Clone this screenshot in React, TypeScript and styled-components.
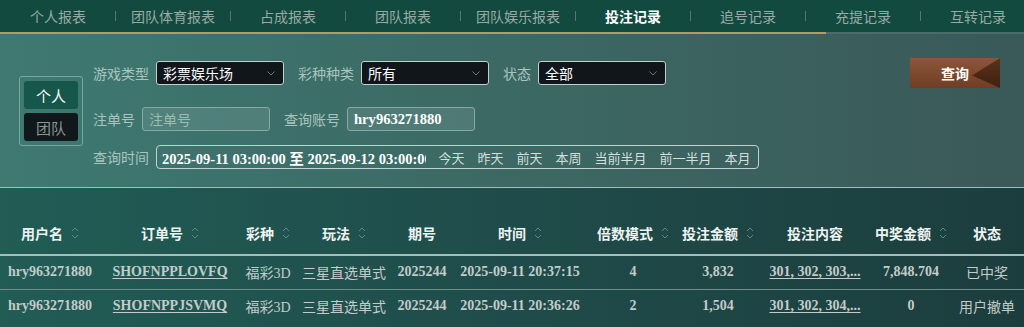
import React from 'react';
import styled, { createGlobalStyle } from 'styled-components';

const GlobalStyle = createGlobalStyle`
  html, body { margin: 0; padding: 0; width: 1024px; height: 327px; overflow: hidden; background: #1f4d49; }
  body { font-family: "Noto Sans CJK SC", "Noto Sans", sans-serif; }
  * { box-sizing: border-box; }
`;

const CJK = `"Noto Sans CJK SC", "Noto Sans", sans-serif`;
const SERIF = `"Liberation Serif", "Noto Sans CJK SC", serif`;

const Page = styled.div`
  width: 1024px;
  height: 327px;
  display: flex;
  flex-direction: column;
  overflow: hidden;
`;

const TabBar = styled.nav`
  display: flex;
  align-items: center;
  height: 32px;
  padding-left: 1px;
  background: #124a3f;
  overflow: hidden;
`;

const Tab = styled.div<{ $active?: boolean }>`
  flex: 0 0 114px;
  text-align: center;
  font-size: 14px;
  line-height: 32px;
  white-space: nowrap;
  color: ${(p) => (p.$active ? '#ffffff' : '#97aaa4')};
  font-weight: ${(p) => (p.$active ? 700 : 400)};
`;

const TabSep = styled.span`
  flex: 0 0 1px;
  height: 10px;
  background: #56766f;
`;

const Track = styled.div`
  display: flex;
  height: 2px;
  background: #4c6c69;
`;

const Thumb = styled.div`
  width: 826px;
  background: #b89a5c;
`;

const Panel = styled.section`
  display: flex;
  align-items: flex-start;
  height: 154px;
  padding: 24px 24px 18px 19px;
  background: linear-gradient(90deg, #3e7972 0%, #3c6a65 45%, #3a5959 100%);
  border-bottom: 1px solid #a3bdb9;
`;

const ToggleGroup = styled.div`
  margin-top: 18px;
  width: 64px;
  padding: 4px;
  display: flex;
  flex-direction: column;
  gap: 4px;
  border: 1px solid #78a59e;
  border-radius: 3px;
`;

const ToggleBtn = styled.div<{ $active?: boolean }>`
  height: 28px;
  display: flex;
  align-items: center;
  justify-content: center;
  border-radius: 3px;
  font-size: 15px;
  background: ${(p) => (p.$active ? '#17564a' : '#10181b')};
  color: ${(p) => (p.$active ? '#f2f6f5' : '#8a9794')};
`;

const Form = styled.div`
  flex: 1;
  margin-left: 10px;
  display: flex;
  flex-direction: column;
`;

const Row = styled.div<{ $mt?: number }>`
  display: flex;
  align-items: center;
  margin-top: ${(p) => p.$mt ?? 0}px;
`;

const Field = styled.div`
  display: flex;
  align-items: center;
  gap: 7px;
  & + & {
    margin-left: 14px;
  }
`;

const Label = styled.span`
  font-size: 14px;
  color: #a9c4be;
  white-space: nowrap;
`;

const Select = styled.div`
  width: 128px;
  height: 24px;
  padding: 0 8px 0 6px;
  display: flex;
  align-items: center;
  justify-content: space-between;
  background: #10161a;
  border: 1px solid #c5cfcf;
  border-radius: 3px;
  color: #ffffff;
  font-size: 14px;
`;

const TextInput = styled.input<{ $serif?: boolean }>`
  width: 128px;
  height: 24px;
  padding: 0 6px;
  background: rgba(255, 255, 255, 0.1);
  border: 1px solid #86a9a4;
  border-radius: 3px;
  outline: none;
  color: #ffffff;
  font-size: ${(p) => (p.$serif ? '14.6px' : '14px')};
  font-family: ${(p) => (p.$serif ? SERIF : CJK)};
  font-weight: ${(p) => (p.$serif ? 700 : 400)};
  &::placeholder {
    color: #a0bab5;
  }
`;

const DateBox = styled.div`
  height: 24px;
  display: flex;
  align-items: center;
  padding-right: 1px;
  border: 1px solid #c3d2cf;
  border-radius: 4px;
`;

const DateInput = styled.input`
  width: 269px;
  height: 22px;
  margin-right: 6px;
  padding: 0 0 0 5px;
  border: none;
  outline: none;
  background: transparent;
  color: #ffffff;
  font-family: ${SERIF};
  font-weight: 700;
  font-size: 14.5px;
`;

const QuickLink = styled.span`
  padding: 0 6.5px;
  font-size: 13px;
  color: #d4dfdc;
  white-space: nowrap;
`;

const QueryButton = styled.button`
  position: relative;
  margin-left: auto;
  width: 90px;
  height: 30px;
  border: none;
  padding: 0;
  overflow: hidden;
  background: linear-gradient(180deg, #8c5738 0%, #7a472c 60%, #6f3e25 100%);
  color: #ffffff;
  font-family: ${CJK};
  font-size: 14px;
  font-weight: 700;
  &::after {
    content: '';
    position: absolute;
    top: 0;
    right: 0;
    width: 28px;
    height: 30px;
    background: linear-gradient(180deg, #5d321b 0%, #3e2010 100%);
    clip-path: polygon(100% 0, 100% 100%, 0 58%);
  }
`;

const TableArea = styled.div`
  flex: 1;
  padding-top: 23px;
  background: linear-gradient(90deg, #215c55 0%, #1f4c4a 50%, #1c3d3e 100%);
`;

const Table = styled.table`
  width: 1024px;
  border-collapse: collapse;
  table-layout: fixed;
`;

const Th = styled.th`
  height: 44px;
  padding: 0;
  text-align: center;
  vertical-align: middle;
  color: #eef3f1;
  font-family: ${CJK};
  font-size: 14px;
  font-weight: 700;
  border-bottom: 2px solid #a6bebb;
`;

const HeadContent = styled.span`
  display: inline-flex;
  align-items: center;
  gap: 8px;
`;

const Tr = styled.tr`
  & + & td {
    border-top: 1px solid #6e8e8a;
  }
`;

const Td = styled.td<{ $serif?: boolean }>`
  height: 34px;
  padding: 0;
  text-align: center;
  vertical-align: middle;
  white-space: nowrap;
  overflow: hidden;
  color: #c3ccc9;
  font-size: 14px;
  font-family: ${(p) => (p.$serif ? SERIF : `"Liberation Serif", ${CJK}`)};
  font-weight: ${(p) => (p.$serif ? 700 : 400)};
`;

const Link = styled.span`
  text-decoration: underline;
  text-underline-offset: 2px;
`;

const Chevron = () => (
  <svg width="8" height="5" viewBox="0 0 8 5">
    <polyline points="0.5,0.5 4,4 7.5,0.5" fill="none" stroke="#6d7474" strokeWidth="1" />
  </svg>
);

const SortIcon = () => (
  <svg width="8" height="16" viewBox="0 0 8 16">
    <polyline points="1,6 4,3 7,6" fill="none" stroke="#5b8a82" strokeWidth="1" />
    <polyline points="1,10 4,13 7,10" fill="none" stroke="#5b8a82" strokeWidth="1" />
  </svg>
);

const tabs = ['个人报表', '团队体育报表', '占成报表', '团队报表', '团队娱乐报表', '投注记录', '追号记录', '充提记录', '互转记录'];

const columns: { title: string; width: number; sort: boolean }[] = [
  { title: '用户名', width: 100, sort: true },
  { title: '订单号', width: 140, sort: true },
  { title: '彩种', width: 56, sort: true },
  { title: '玩法', width: 96, sort: true },
  { title: '期号', width: 60, sort: false },
  { title: '时间', width: 136, sort: true },
  { title: '倍数模式', width: 90, sort: true },
  { title: '投注金额', width: 80, sort: true },
  { title: '投注内容', width: 114, sort: false },
  { title: '中奖金额', width: 78, sort: true },
  { title: '状态', width: 74, sort: false },
];

const rows = [
  {
    user: 'hry963271880', order: 'SHOFNPPLOVFQ', lottery: '福彩3D', play: '三星直选单式', issue: '2025244',
    time: '2025-09-11 20:37:15', multi: '4', amount: '3,832', content: '301, 302, 303,...', win: '7,848.704', status: '已中奖',
  },
  {
    user: 'hry963271880', order: 'SHOFNPPJSVMQ', lottery: '福彩3D', play: '三星直选单式', issue: '2025244',
    time: '2025-09-11 20:36:26', multi: '2', amount: '1,504', content: '301, 302, 304,...', win: '0', status: '用户撤单',
  },
];

const quickLinks = ['今天', '昨天', '前天', '本周', '当前半月', '前一半月', '本月'];

export default function App() {
  return (
    <Page>
      <GlobalStyle />
      <TabBar>
        {tabs.map((t, i) => (
          <React.Fragment key={t}>
            {i > 0 && <TabSep />}
            <Tab $active={i === 5}>{t}</Tab>
          </React.Fragment>
        ))}
      </TabBar>
      <Track>
        <Thumb />
      </Track>
      <Panel>
        <ToggleGroup>
          <ToggleBtn $active>个人</ToggleBtn>
          <ToggleBtn>团队</ToggleBtn>
        </ToggleGroup>
        <Form>
          <Row>
            <Field>
              <Label>游戏类型</Label>
              <Select>彩票娱乐场<Chevron /></Select>
            </Field>
            <Field>
              <Label>彩种种类</Label>
              <Select>所有<Chevron /></Select>
            </Field>
            <Field>
              <Label>状态</Label>
              <Select>全部<Chevron /></Select>
            </Field>
            <QueryButton>查询</QueryButton>
          </Row>
          <Row $mt={19}>
            <Field>
              <Label>注单号</Label>
              <TextInput placeholder="注单号" readOnly />
            </Field>
            <Field>
              <Label>查询账号</Label>
              <TextInput $serif value="hry963271880" readOnly />
            </Field>
          </Row>
          <Row $mt={14}>
            <Field>
              <Label>查询时间</Label>
              <DateBox>
                <DateInput value="2025-09-11 03:00:00 至 2025-09-12 03:00:00" readOnly />
                {quickLinks.map((q) => (
                  <QuickLink key={q}>{q}</QuickLink>
                ))}
              </DateBox>
            </Field>
          </Row>
        </Form>
      </Panel>
      <TableArea>
        <Table>
          <colgroup>
            {columns.map((c) => (
              <col key={c.title} style={{ width: c.width }} />
            ))}
          </colgroup>
          <thead>
            <tr>
              {columns.map((c) => (
                <Th key={c.title}>
                  <HeadContent>
                    {c.title}
                    {c.sort && <SortIcon />}
                  </HeadContent>
                </Th>
              ))}
            </tr>
          </thead>
          <tbody>
            {rows.map((r) => (
              <Tr key={r.order}>
                <Td $serif>{r.user}</Td>
                <Td $serif><Link>{r.order}</Link></Td>
                <Td>{r.lottery}</Td>
                <Td>{r.play}</Td>
                <Td $serif>{r.issue}</Td>
                <Td $serif>{r.time}</Td>
                <Td $serif>{r.multi}</Td>
                <Td $serif>{r.amount}</Td>
                <Td $serif><Link>{r.content}</Link></Td>
                <Td $serif>{r.win}</Td>
                <Td>{r.status}</Td>
              </Tr>
            ))}
          </tbody>
        </Table>
      </TableArea>
    </Page>
  );
}
